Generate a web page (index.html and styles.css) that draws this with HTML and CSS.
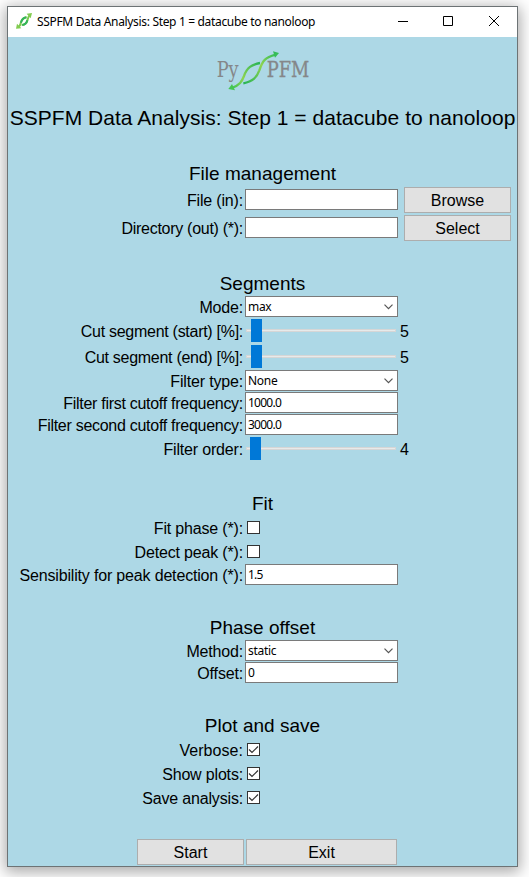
FILE: index.html
```html
<!DOCTYPE html>
<html lang="en">
<head>
<meta charset="utf-8">
<title>SSPFM Data Analysis: Step 1 = datacube to nanoloop</title>
<link rel="stylesheet" href="styles.css">
</head>
<body>
<div class="window">
  <header class="titlebar">
    <svg class="app-icon" viewBox="0 0 48 48">
      <g fill="none" stroke-width="6">
        <path d="M6 43C15 38 13 33 15 27C18 19 23 14 32 13" stroke="#7cc94e"/>
        <path d="M17 36C27 35 32 30 34 23C36 16 36 11 42 6" stroke="#7cc94e"/>
        <path d="M15 29C17 20 22 15 31 13M19 36C28 35 32 30 34 22" stroke="#32b45a"/>
      </g>
      <path d="M0 47L3 32L16 46ZM32 2L48 0L44 16Z" fill="#82cc50"/>
    </svg>
    <span class="caption">SSPFM Data Analysis: Step 1 = datacube to nanoloop</span>
    <svg class="controls" viewBox="0 0 104 12" fill="none" stroke="#000">
      <path d="M0 5.5H10"/>
      <path d="M45.500 .5H54.500V9.500H45.500Z"/>
      <path d="M91 0L101 10M101 0L91 10"/>
    </svg>
  </header>
  <main class="content">
    <svg class="logo" viewBox="0 0 345 165">
      <defs>
        <linearGradient id="g1" x1="0" y1="1" x2="1" y2="0"><stop offset="0" stop-color="#3fc354"/><stop offset=".4" stop-color="#8ed450"/><stop offset="1" stop-color="#27b455"/></linearGradient>
        <linearGradient id="g2" x1="0" y1="1" x2="1" y2="0"><stop offset="0" stop-color="#27b455"/><stop offset=".6" stop-color="#8ed450"/><stop offset="1" stop-color="#35bd58"/></linearGradient>
      </defs>
      <text class="logo-text" x="35" y="104" textLength="66" lengthAdjust="spacingAndGlyphs">Py</text>
      <text class="logo-text logo-bold" x="185" y="106" textLength="128" lengthAdjust="spacingAndGlyphs">PFM</text>
      <g fill="none" stroke-width="7">
        <path d="M80 138C104 130 111 118 117 102C126 76 140 68 165 63" stroke="url(#g1)"/>
        <path d="M115 124C143 119 155 107 163 85C173 55 180 47 212 38" stroke="url(#g2)"/>
      </g>
      <path d="M70 141L81 126L90 145Z" fill="#45c653"/>
      <path d="M204 28L222 33L210 47Z" fill="#35bd58"/>
    </svg>
    <h1>SSPFM Data Analysis: Step 1 = datacube to nanoloop</h1>

    <section>
      <h2>File management</h2>
      <div class="row tall"><label>File (in):</label><div class="field"></div><button>Browse</button></div>
      <div class="row tall"><label class="snug">Directory (out) (*):</label><div class="field"></div><button>Select</button></div>
    </section>

    <section>
      <h2>Segments</h2>
      <div class="row"><label>Mode:</label><div class="field">max<svg class="chevron" viewBox="0 0 9 6"><path d="M.5 .7L4.500 4.700L8.500 .7"/></svg></div></div>
      <div class="row slide"><label class="snug">Cut segment (start) [%]:</label><div class="slider"><i></i></div><span class="value">5</span></div>
      <div class="row slide"><label class="snug">Cut segment (end) [%]:</label><div class="slider"><i></i></div><span class="value">5</span></div>
      <div class="row"><label>Filter type:</label><div class="field">None<svg class="chevron" viewBox="0 0 9 6"><path d="M.5 .7L4.500 4.700L8.500 .7"/></svg></div></div>
      <div class="row"><label class="snug">Filter first cutoff frequency:</label><div class="field number">1000.0</div></div>
      <div class="row"><label class="snug">Filter second cutoff frequency:</label><div class="field number">3000.0</div></div>
      <div class="row slide"><label>Filter order:</label><div class="slider low"><i></i></div><span class="value">4</span></div>
    </section>

    <section>
      <h2>Fit</h2>
      <div class="row mark"><label>Fit phase (*):</label><div class="check"></div></div>
      <div class="row mark"><label>Detect peak (*):</label><div class="check"></div></div>
      <div class="row"><label>Sensibility for peak detection (*):</label><div class="field number">1.5</div></div>
    </section>

    <section>
      <h2>Phase offset</h2>
      <div class="row"><label>Method:</label><div class="field">static<svg class="chevron" viewBox="0 0 9 6"><path d="M.5 .7L4.500 4.700L8.500 .7"/></svg></div></div>
      <div class="row"><label>Offset:</label><div class="field number">0</div></div>
    </section>

    <section>
      <h2>Plot and save</h2>
      <div class="row mark"><label class="loose">Verbose:</label><div class="check"><svg viewBox="0 0 11 11"><path d="M1 5.500L4 8.500L10 2.500"/></svg></div></div>
      <div class="row mark"><label>Show plots:</label><div class="check"><svg viewBox="0 0 11 11"><path d="M1 5.500L4 8.500L10 2.500"/></svg></div></div>
      <div class="row mark"><label>Save analysis:</label><div class="check"><svg viewBox="0 0 11 11"><path d="M1 5.500L4 8.500L10 2.500"/></svg></div></div>
    </section>

    <footer class="actions"><button>Start</button><button class="exit">Exit</button></footer>
  </main>
</div>
</body>
</html>
```
FILE: styles.css
```css
* { box-sizing: border-box; }

body {
  margin: 0;
  height: 877px;
  padding: 6px 0 0 7px;
  overflow: hidden;
  background: #fff;
  color: #000;
  font-family: "Liberation Sans", Arial, sans-serif;
}

.window {
  width: 511px;
  height: 861px;
  border: 1px solid #6d7375;
  background: #add8e6;
  box-shadow: 0 3px 14px 2px rgba(0, 0, 0, .34);
}

.titlebar {
  height: 30px;
  display: flex;
  align-items: center;
  padding-left: 8px;
  background: #fff;
}

.app-icon { width: 16px; height: 16px; margin-top: -2px; }

.caption {
  width: 361px;
  margin: -1px 0 0 5px;
  font: 12px "Noto Sans", sans-serif;
  letter-spacing: -.33px;
  white-space: nowrap;
}

.controls { width: 104px; height: 12px; margin-top: -1px; }

.logo { display: block; width: 115px; height: 55px; margin: 5px 0 0 197px; }
.logo-text { font: 65px "DejaVu Serif", serif; fill: #858789; }
.logo-bold { stroke: #858789; stroke-width: 1; }

h1, h2 { margin: 0; text-align: center; font-weight: 400; white-space: nowrap; }
h1 { height: 28px; margin-top: 7px; font-size: 21px; line-height: 28px; letter-spacing: .04px; }
h2 { height: 24px; font-size: 19px; line-height: 24px; letter-spacing: .02px; }

section { margin-top: 30px; }

.row {
  height: 22px;
  display: grid;
  grid-template-columns: 235px 153px 1fr;
  column-gap: 2px;
  font-size: 16px;
  line-height: 22px;
}
.row label { padding-top: 1px; text-align: right; letter-spacing: -.17px; white-space: nowrap; }
.row .snug { letter-spacing: -.28px; }
.row .loose { letter-spacing: .05px; }
.value { padding-top: 1px; }

.tall { height: 28px; line-height: 28px; }
.tall .field { margin-top: 3px; }
.tall button { margin: 1px 0 0 4px; }

.slide { height: 26px; line-height: 26px; }
.mark { height: 24px; line-height: 24px; }

.field {
  height: 21px;
  display: flex;
  justify-content: space-between;
  align-items: center;
  padding: 0 4px 0 2px;
  border: 1px solid #7a7a7a;
  background: #fff;
  font: 12px "Noto Sans", sans-serif;
  letter-spacing: -.3px;
}
.number { letter-spacing: -.75px; }

.chevron { width: 9px; height: 6px; fill: none; stroke: #555; stroke-width: 1.200; }

.slider {
  height: 3px;
  margin: 11px 2px 0 1px;
  padding-left: 5px;
  border: 1px solid #d6d6d6;
  background: #e7eaea;
}
.slider i { display: block; width: 11px; height: 23px; margin: -11px 0 0 -1px; background: #0078d7; }
.slider.low { padding-left: 4px; }

.check { width: 13px; height: 13px; margin: 5px 0 0 2px; border: 1px solid #333; background: #fff; }
.check svg { display: block; width: 11px; height: 11px; fill: none; stroke: #333; stroke-width: 1.200; }

button {
  width: 107px;
  height: 26px;
  padding: 2px 0 0;
  border: 1px solid #adadad;
  background: #e1e1e1;
  color: #000;
  font: 16px/22px "Liberation Sans", Arial, sans-serif;
}

.actions { display: flex; gap: 2px; margin: 29px 0 0 129px; }
.actions .exit { width: 151px; }
```
